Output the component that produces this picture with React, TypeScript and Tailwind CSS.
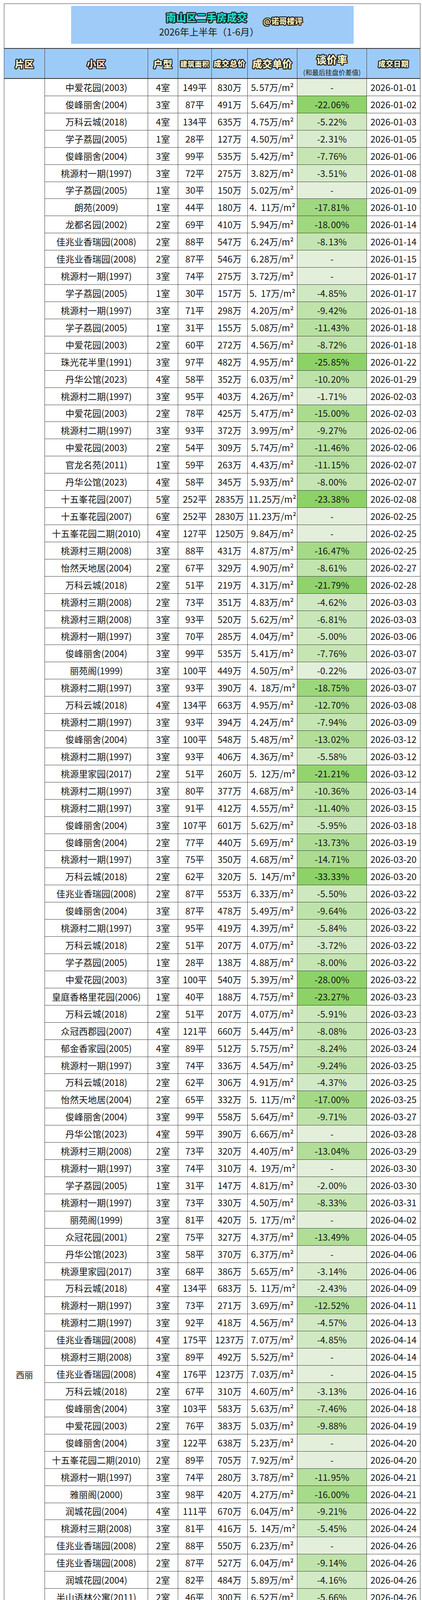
import React from "react";

const RAW = `中爱花园(2003),4,149,830,5.57,,01-01
俊峰丽舍(2004),3,87,491,5.64,22.06,01-02
万科云城(2018),4,134,635,4.75,5.22,01-03
学子荔园(2005),1,28,127,4.50,2.31,01-05
俊峰丽舍(2004),3,99,535,5.42,7.76,01-06
桃源村一期(1997),3,72,275,3.82,3.51,01-08
学子荔园(2005),1,30,150,5.02,,01-09
朗苑(2009),1,44,180,4.11,17.81,01-10
龙都名园(2002),2,69,410,5.94,18.00,01-14
佳兆业香瑞园(2008),2,88,547,6.24,8.13,01-14
佳兆业香瑞园(2008),2,87,546,6.28,,01-15
桃源村一期(1997),3,74,275,3.72,,01-17
学子荔园(2005),1,30,157,5.17,4.85,01-17
桃源村一期(1997),3,71,298,4.20,9.42,01-18
学子荔园(2005),1,31,155,5.08,11.43,01-18
中爱花园(2003),2,60,272,4.56,8.72,01-18
珠光花半里(1991),3,97,482,4.95,25.85,01-22
丹华公馆(2023),4,58,352,6.03,10.20,01-29
桃源村二期(1997),3,95,403,4.26,1.71,02-03
中爱花园(2003),2,78,425,5.47,15.00,02-03
桃源村二期(1997),3,93,372,3.99,9.27,02-06
中爱花园(2003),2,54,309,5.74,11.46,02-06
官龙名苑(2011),1,59,263,4.43,11.15,02-07
丹华公馆(2023),4,58,345,5.93,8.00,02-07
十五峯花园(2007),5,252,2835,11.25,23.38,02-08
十五峯花园(2007),6,252,2830,11.23,,02-25
十五峯花园二期(2010),4,127,1250,9.84,,02-25
桃源村三期(2008),3,88,431,4.87,16.47,02-25
怡然天地居(2004),2,67,329,4.90,8.61,02-27
万科云城(2018),2,51,219,4.31,21.79,02-28
桃源村三期(2008),2,73,351,4.83,4.62,03-03
桃源村三期(2008),3,93,520,5.62,6.81,03-03
桃源村一期(1997),3,70,285,4.04,5.00,03-06
俊峰丽舍(2004),3,99,535,5.41,7.76,03-07
丽苑阁(1999),3,100,449,4.50,0.22,03-07
桃源村二期(1997),3,93,390,4.18,18.75,03-07
万科云城(2018),4,134,663,4.95,12.70,03-08
桃源村二期(1997),3,93,394,4.24,7.94,03-09
俊峰丽舍(2004),3,100,548,5.48,13.02,03-12
桃源村二期(1997),3,93,406,4.36,5.58,03-12
桃源里家园(2017),2,51,260,5.12,21.21,03-12
桃源村二期(1997),3,80,377,4.68,10.36,03-14
桃源村二期(1997),3,91,412,4.55,11.40,03-15
俊峰丽舍(2004),3,107,601,5.62,5.95,03-18
俊峰丽舍(2004),2,77,440,5.69,13.73,03-19
桃源村一期(1997),3,75,350,4.68,14.71,03-20
万科云城(2018),2,62,320,5.14,33.33,03-20
佳兆业香瑞园(2008),2,87,553,6.33,5.50,03-22
俊峰丽舍(2004),3,87,478,5.49,9.64,03-22
桃源村二期(1997),3,95,419,4.39,5.84,03-22
万科云城(2018),2,51,207,4.07,3.72,03-22
学子荔园(2005),1,28,138,4.88,8.00,03-22
中爱花园(2003),3,100,540,5.39,28.00,03-22
皇庭香格里花园(2006),1,40,188,4.75,23.27,03-23
万科云城(2018),2,51,207,4.07,5.91,03-23
众冠西郡园(2007),4,121,660,5.44,8.08,03-23
郁金香家园(2005),4,89,512,5.75,8.24,03-24
桃源村一期(1997),3,74,336,4.54,9.24,03-25
万科云城(2018),2,62,306,4.91,4.37,03-25
怡然天地居(2004),2,65,332,5.11,17.00,03-25
俊峰丽舍(2004),3,99,558,5.64,9.71,03-27
丹华公馆(2023),4,59,390,6.66,,03-28
桃源村三期(2008),2,73,320,4.40,13.04,03-29
桃源村一期(1997),3,74,310,4.19,,03-30
学子荔园(2005),1,31,147,4.81,2.00,03-30
桃源村一期(1997),3,73,330,4.50,8.33,03-31
丽苑阁(1999),3,81,420,5.17,,04-02
众冠花园(2001),2,75,327,4.37,13.49,04-05
丹华公馆(2023),3,58,370,6.37,,04-06
桃源里家园(2017),3,68,386,5.65,3.14,04-06
万科云城(2018),4,134,683,5.11,2.43,04-09
桃源村一期(1997),3,73,271,3.69,12.52,04-11
桃源村二期(1997),3,92,418,4.56,4.57,04-13
佳兆业香瑞园(2008),4,175,1237,7.07,4.85,04-14
桃源村三期(2008),3,89,492,5.52,,04-14
佳兆业香瑞园(2008),4,176,1237,7.03,,04-15
万科云城(2018),2,67,310,4.60,3.13,04-16
俊峰丽舍(2004),3,103,583,5.63,7.46,04-18
中爱花园(2003),2,76,383,5.03,9.88,04-19
俊峰丽舍(2004),3,122,638,5.23,,04-20
十五峯花园二期(2010),2,89,705,7.92,,04-20
桃源村一期(1997),3,74,280,3.78,11.95,04-21
雅丽阁(2000),3,98,420,4.27,16.00,04-21
润城花园(2004),4,111,670,6.04,9.21,04-22
桃源村三期(2008),3,81,416,5.14,5.45,04-24
佳兆业香瑞园(2008),2,88,550,6.23,,04-26
佳兆业香瑞园(2008),2,87,527,6.04,9.14,04-26
润城花园(2004),2,82,484,5.89,4.16,04-26
半山语林公寓(2011),2,46,300,6.52,5.66,04-26
佳兆业香瑞园(2008),2,87,527,6.04,,04-27
佳兆业香瑞园(2008),8,299,2960,9.89,22.11,04-29
佳兆业香瑞园(2008),2,88,550,6.23,1.43,04-29
皇庭香格里花园(2006),2,71,430,6.02,6.11,05-02
桃源村三期(2008),2,73,330,4.54,8.33,05-02
佳兆业香瑞园(2008),3,124,920,7.42,,05-05
欧陆经典(2005),2,66,350,5.28,12.28,05-05
俊峰丽舍(2004),3,87,488,5.61,3.94,05-09
桃源村二期(1997),3,92,448,4.85,2.61,05-10
桃源村三期(2008),3,89,479,5.37,11.30,05-10
万科云城(2018),3,92,430,4.66,4.44,05-10
众冠花园(2001),3,97,412,4.27,8.44,05-10
丹华公馆(2023),4,58,386,6.61,3.26,05-11
中爱花园(2003),2,76,402,5.26,6.73,05-12
学子荔园(2005),2,71,358,5.04,10.28,05-16
俊峰丽舍(2004),3,87,492,5.65,5.04,05-17
俊峰丽舍(2004),3,107,572,5.32,8.92,05-17
水木华庭(2003),3,103,550,5.34,,05-17
官龙名苑(2011),1,60,268,4.50,10.07,05-18
水木华庭(2003),3,104,550,5.31,11.29,05-19
润城花园(2004),3,97,528,5.43,10.20,05-23
润城花园(2004),3,97,555,5.71,10.48,05-23
十五峯花园(2007),4,175,1320,7.54,,05-24
怡然天地居(2004),3,85,435,5.11,5.02,05-24
中爱花园(2003),2,60,340,5.70,10.53,05-24
俊峰丽舍(2004),3,107,598,5.59,1.64,05-25
万科云城(2018),2,67,327,4.89,5.22,05-25
城市假日花园(2001),3,123,741,6.05,,05-26
万科云城(2018),2,62,301,4.83,4.44,05-27
万科云城(2018),2,68,313,4.60,10.06,05-29
学子荔园(2005),1,30,151,4.98,4.43,05-29
十五峯花园二期(2010),2,89,710,7.95,5.33,05-30
桃源村二期(1997),3,93,390,4.18,13.33,05-30
桃源村一期(1997),3,71,304,4.29,6.46,06-01
珠光花半里(1991),2,71,371,5.19,11.67,06-02
十五峯花园二期(2010),3,148,1100,7.43,,06-05
佳兆业香瑞园(2008),3,89,579,6.47,8.13,06-06
十五峯花园二期(2010),2,89,715,8.03,,06-06
万科云城(2018),2,51,205,4.03,12.85,06-07
香榭峰景苑(2008),2,68,392,5.76,9.89,06-07
城市假日花园(2001),3,125,740,5.92,5.13,06-08
万科云城(2018),4,134,645,4.82,6.25,06-10
佳兆业香瑞园(2008),3,89,591,6.67,,06-12
万科云城(2018),2,62,306,4.91,7.27,06-13
佳兆业香瑞园(2008),2,87,585,6.72,,06-14
宝珠花园(1997),3,87,473,5.44,12.08,06-14
万科云城(2018),2,62,328,5.27,3.24,06-14
万科云城(2018),2,67,313,4.68,7.94,06-15
佳兆业香瑞园(2008),2,87,585,6.70,10.00,06-19
中爱花园(2003),2,60,338,5.63,8.65,06-20
万科云城(2018),2,51,209,4.11,2.88,06-22
桃源村二期(1997),3,93,420,4.51,12.50,06-26
桃源村二期(1997),3,93,416,4.47,9.10,06-26
十五峯花园(2007),4,175,1300,7.43,,06-27
桃源村二期(1997),3,93,416,4.47,10.54,06-27
俊峰丽舍(2004),3,105,610,5.80,3.17,06-28
俊峰丽舍(2004),3,107,598,5.59,8.00,06-28
润城花园(2004),3,97,528,5.42,,06-28
润城花园(2004),3,97,555,5.69,,06-28
俊峰丽舍(2004),3,99,561,5.67,,06-29
俊峰丽舍(2004),3,99,561,5.67,6.20,06-29
皇庭香格里花园(2006),1,46,236,5.13,9.23,06-30`;

type Row = {
  name: string;
  room: string;
  area: string;
  total: string;
  unit: string;
  rate: string;
  date: string;
};

const rows: Row[] = RAW.trim()
  .split("\n")
  .map((l) => {
    const [name, room, area, total, unit, rate, date] = l.split(",");
    return { name, room, area, total, unit, rate, date };
  });

function rateBg(rate: string): string {
  if (!rate) return "#e3efdb";
  const v = parseFloat(rate);
  const t =
    Math.min(v / 22, 1) * 0.97 + (v > 22 ? Math.min((v - 22) / 40, 0.03) : 0);
  const a = [0xe3, 0xef, 0xdb];
  const b = [0x8d, 0xd2, 0x67];
  const c = a.map((x, i) => Math.round(x + (b[i] - x) * t));
  return `rgb(${c[0]},${c[1]},${c[2]})`;
}

function Decimal({ value, wideOne }: { value: string; wideOne?: boolean }) {
  const [i, d] = value.split(".");
  const wide = wideOne && d.startsWith("1");
  return (
    <>
      {i}.
      <span className={wide ? "ml-[10px]" : "ml-[2px]"}>{d}</span>
    </>
  );
}

const OUTLINE =
  "[text-shadow:2px_0_0_#151515,-2px_0_0_#151515,0_2px_0_#151515,0_-2px_0_#151515,1.5px_1.5px_0_#151515,-1.5px_1.5px_0_#151515,1.5px_-1.5px_0_#151515,-1.5px_-1.5px_0_#151515,2px_1px_0_#151515,2px_-1px_0_#151515,-2px_1px_0_#151515,-2px_-1px_0_#151515,1px_2px_0_#151515,-1px_2px_0_#151515,1px_-2px_0_#151515,-1px_-2px_0_#151515]";

function HeaderCell({
  children,
  last,
}: {
  children: React.ReactNode;
  last?: boolean;
}) {
  return (
    <div
      className={
        last
          ? "flex flex-col items-center justify-center"
          : "flex flex-col items-center justify-center border-r border-[#3d3d3d]"
      }
    >
      {children}
    </div>
  );
}

function Label({
  text,
  size,
  pink,
}: {
  text: string;
  size: string;
  pink?: boolean;
}) {
  return (
    <span
      className={`${size} ${
        pink ? "text-[#fadccf]" : "text-[#fdf2c4]"
      } font-black leading-none tracking-[0.5px] ${OUTLINE}`}
    >
      {text}
    </span>
  );
}

export default function App() {
  return (
    <div className="w-[1080px] min-h-[6863px] bg-white pt-[9px] font-['Noto_Sans_CJK_SC','Noto_Sans',sans-serif] text-[#141414]">
      <div className="ml-[10px] w-[1066px] border border-[#3d3d3d]">
        {/* Title */}
        <div className="h-[113px] pt-[5px]">
          <div className="mx-auto flex h-[97px] w-[723px] flex-col items-center bg-[#9ecbf8] pt-[16px]">
            <div className="relative mr-[29px]">
              <span
                className={`text-[26px] font-black leading-none text-[#22d9c8] ${OUTLINE}`}
              >
                南山区二手房成交
              </span>
              <span
                className={`absolute left-[calc(100%+41px)] top-[13px] whitespace-nowrap text-[20px] font-black leading-none text-[#f1e8b0] ${OUTLINE}`}
              >
                @诺哥楼评
              </span>
            </div>
            <div className="mr-[16px] mt-[9px] text-[24px] leading-none text-[#1a1a1a]">
              2026年上半年（1-6月）
            </div>
          </div>
        </div>

        {/* Header */}
        <div className="grid h-[79px] grid-cols-[104px_264px_77px_86px_92px_127px_178px_136px] border-y-2 border-[#333] bg-[#9dcbf8]">
          <HeaderCell>
            <Label text="片区" size="text-[24px]" />
          </HeaderCell>
          <HeaderCell>
            <Label text="小区" size="text-[24px]" pink />
          </HeaderCell>
          <HeaderCell>
            <Label text="户型" size="text-[24px]" />
          </HeaderCell>
          <HeaderCell>
            <Label text="建筑面积" size="text-[18px]" />
          </HeaderCell>
          <HeaderCell>
            <Label text="成交总价" size="text-[20px]" />
          </HeaderCell>
          <HeaderCell>
            <Label text="成交单价" size="text-[25px]" />
          </HeaderCell>
          <HeaderCell>
            <div className="flex flex-col items-center pt-[6px]">
              <Label text="谈价率" size="text-[26px]" />
              <span className="mt-[11px] text-[17px] leading-none text-[#1a1a1a]">
                (和最后挂盘价差值)
              </span>
            </div>
          </HeaderCell>
          <HeaderCell last>
            <Label text="成交日期" size="text-[19px]" />
          </HeaderCell>
        </div>

        {/* Body */}
        <div className="flex">
          <div className="flex w-[104px] items-center justify-center border-r border-[#3d3d3d] text-[22px]">
            西丽
          </div>
          <div className="w-[960px]">
            {rows.map((r, idx) => (
              <div
                key={idx}
                className={
                  idx === rows.length - 1
                    ? "grid h-[43.93px] grid-cols-[264px_77px_86px_92px_127px_178px_136px] text-[23px] leading-none"
                    : "grid h-[43.93px] grid-cols-[264px_77px_86px_92px_127px_178px_136px] border-b border-[#3d3d3d] text-[23px] leading-none"
                }
              >
                <div className="flex items-center justify-center whitespace-nowrap border-r border-[#3d3d3d]">
                  {r.name}
                </div>
                <div className="flex items-center justify-center whitespace-nowrap border-r border-[#3d3d3d]">
                  {r.room}室
                </div>
                <div className="flex items-center justify-center whitespace-nowrap border-r border-[#3d3d3d]">
                  {r.area}平
                </div>
                <div className="flex items-center justify-center whitespace-nowrap border-r border-[#3d3d3d]">
                  {r.total}万
                </div>
                <div className="flex items-center justify-center whitespace-nowrap border-r border-[#3d3d3d]">
                  <Decimal value={r.unit} wideOne />
                  万/m²
                </div>
                <div
                  className="flex items-center justify-center whitespace-nowrap border-r border-[#3d3d3d]"
                  style={{ backgroundColor: rateBg(r.rate) }}
                >
                  {r.rate ? (
                    <>
                      -<Decimal value={r.rate} />%
                    </>
                  ) : (
                    "-"
                  )}
                </div>
                <div className="flex items-center justify-center whitespace-nowrap">
                  2026-{r.date}
                </div>
              </div>
            ))}
          </div>
        </div>
      </div>

      {/* faint continuation below table */}
      <div className="ml-[10px] flex h-[20px] w-[1066px]">
        <div className="w-[105px]" />
        <div className="w-[264px] border-l border-[#ececec]" />
        <div className="w-[77px] border-l border-[#ececec]" />
        <div className="w-[86px] border-l border-[#ececec]" />
        <div className="w-[92px] border-l border-[#ececec]" />
        <div className="w-[127px] border-l border-[#ececec]" />
        <div className="w-[178px] border-l border-[#ececec]" />
        <div className="w-[136px] border-l border-r border-[#ececec]" />
      </div>
    </div>
  );
}
